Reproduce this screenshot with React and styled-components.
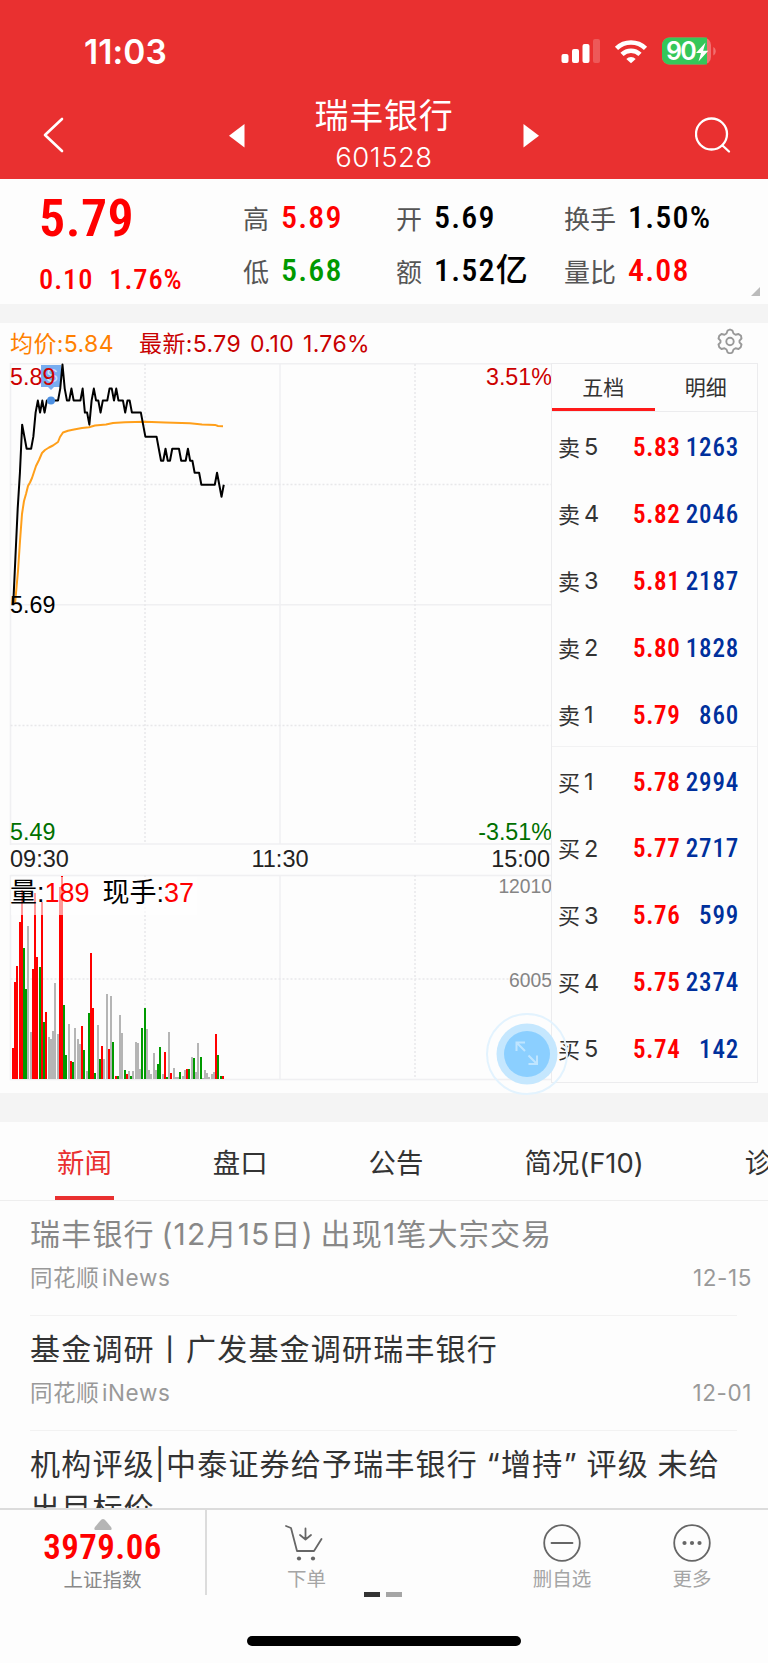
import React from "react";
import styled, { createGlobalStyle } from "styled-components";

const cjk = `"Noto Sans CJK SC", sans-serif`;

// one entry per minute since 09:30, in cents
const prices = [
  569, 573, 577, 580, 584, 583, 582, 582, 582, 583, 585, 586, 585, 586, 585,
  586, 586, 586, 586, 586, 586, 587, 589, 587, 586, 586, 587, 586, 586, 586,
  586, 587, 585, 585, 584, 586, 587, 586, 586, 585, 586, 586, 586, 587, 587,
  586, 587, 586, 586, 586, 585, 586, 586, 585, 585, 585, 585, 585, 584, 583,
  583, 583, 583, 583, 583, 582, 581, 581, 582, 581, 581, 582, 582, 582, 582,
  581, 581, 581, 582, 581, 581, 580, 580, 580, 579, 579, 579, 579, 579, 579,
  579, 580, 579, 578, 579,
];

// r = up, g = down, n = unchanged, followed by the bar height
const volumes =
  "r31 r97 r113 r157 r189 g131 g90 n153 n47 r110 r186 r122 g112 r177 g57 r67 n42 n40 n48 n96 n45 r192 r203 g74 g24 n55 r18 g17 n51 n40 n35 r53 g29 n8 g66 r126 r71 g6 n54 g20 r33 n20 n85 r30 n83 g37 r3 g3 n64 n46 g9 r5 n8 g3 n8 n37 n36 n10 g51 g71 n50 n9 n5 n26 n9 g15 g32 n5 r27 g2 n47 r6 n11 n2 n2 g7 n3 n9 r10 g10 n22 g21 n7 n36 g22 n1 n9 n6 n2 n5 n7 r45 g24 g3 r3".split(
    " "
  );

const barColors = { r: "#ff0000", g: "#009a00", n: "#b5b5b5" };

const average =
  "15,241 18,208 20,178 22,151 24,138 26,131 28,123 30,119.500 32,115 34,109 36,103 39,97 42,90 45,87 49,84.500 53,82.500 58,79 60,74 63,69.500 68,67.800 74,66.600 82,64.900 89,64.200 95,62.500 106,61.500 113,60 125,59.200 145,58.800 165,59.600 190,60.300 202,61.500 215,61.900 218,63 223,63.200";

const orders = [
  { side: "卖", level: 5, price: "5.83", volume: 1263 },
  { side: "卖", level: 4, price: "5.82", volume: 2046 },
  { side: "卖", level: 3, price: "5.81", volume: 2187 },
  { side: "卖", level: 2, price: "5.80", volume: 1828 },
  { side: "卖", level: 1, price: "5.79", volume: 860 },
  { side: "买", level: 1, price: "5.78", volume: 2994 },
  { side: "买", level: 2, price: "5.77", volume: 2717 },
  { side: "买", level: 3, price: "5.76", volume: 599 },
  { side: "买", level: 4, price: "5.75", volume: 2374 },
  { side: "买", level: 5, price: "5.74", volume: 142 },
];

const news = [
  { title: "瑞丰银行\u2009(12月15日)\u2009出现1笔大宗交易", date: "12-15", read: true },
  { title: "基金调研丨广发基金调研瑞丰银行", date: "12-01" },
  { title: "机构评级|中泰证券给予瑞丰银行 “增持” 评级 未给出目标价" },
];

function StatusBar() {
  return (
    <StatusRow>
      <Clock>11:03</Clock>
      <svg width="156" height="30" viewBox="0 0 156 30">
        <g fill="#fff">
          <rect x="1.500" y="18" width="7" height="9" rx="2" />
          <rect x="12" y="13" width="7" height="14" rx="2" />
          <rect x="22.500" y="8" width="7" height="19" rx="2" />
          <rect x="33" y="3" width="7" height="24" rx="2" opacity=".2" />
        </g>
        <g fill="none" stroke="#fff" strokeWidth="4.600">
          <path d="M56.500 12.300a21 21 0 0 1 29 0" />
          <path d="M62 18.400a13 13 0 0 1 18 0" />
        </g>
        <path d="M66.300 22.900a6.600 6.600 0 0 1 9.400 0L71 27.300z" fill="#fff" />
        <rect x="102" y="1.500" width="49" height="27" rx="7.500" fill="#f17070" />
        <path
          d="M109.500 1.500H147v27h-37.500a7.500 7.500 0 0 1-7.500-7.500v-12a7.500 7.500 0 0 1 7.500-7.500z"
          fill="#35c759"
        />
        <path d="M153.300 11c3.200 1.200 3.200 7.300 0 8.500z" fill="#f17070" />
        <text x="106" y="24" className="level">
          90
        </text>
        <path d="M145.500 6.500l-9.500 10.500h5l-2.500 8.500 9.800-10.800h-5.200z" fill="#fff" />
      </svg>
    </StatusRow>
  );
}

function Chart() {
  const points = prices
    .map((p, i) => `${13.2 + i * 2.24},${(589 - p) * 12.03 + 1.5}`)
    .join(" ");

  return (
    <ChartSvg width="552" height="720" viewBox="0 0 552 720">
      <g fill="none" stroke="#f0f0f2" strokeWidth="1.500">
        <path d="M10.500 482V.7H552M10.500 241.800H552M10.500 481H552M10.500 512.500H552M10.500 512v204.500H552M280 1v480M280 512v204" />
        <path
          d="M10.500 121.500H552M10.500 362.500H552M145 1v480M415 1v480M10.500 616H552M145 512v204M415 512v204"
          strokeDasharray="2 2"
          stroke="#e8e8ea"
        />
      </g>

      <path d="M41 2h20v22h-7l-3 3-3-3h-7z" fill="#78adf0" />
      <text x="46" y="19" fontSize="18" fill="#cbdff9">
        S
      </text>
      <polyline points={average} stroke="#ff9f1a" className="line" />
      <polyline points={points} stroke="#000" className="line" />
      <circle cx="51" cy="37.500" r="4" fill="#4d90e2" />

      <g shapeRendering="crispEdges">
        {volumes.map((v, i) => {
          const height = Number(v.slice(1));
          return (
            <rect
              key={i}
              x={Math.round(11.8 + i * 2.235)}
              y={716 - height}
              width="2"
              height={height}
              fill={barColors[v[0]]}
            />
          );
        })}
      </g>
      <rect x="11" y="514" width="186" height="38" fill="#fff" opacity=".6" />

      <g fontSize="23.300">
        <text x="10" y="22" fill="#cc0000">5.89</text>
        <text x="10" y="249.500">5.69</text>
        <text x="10" y="477" fill="#007000">5.49</text>
        <text x="552" y="22" fill="#cc0000" textAnchor="end">3.51%</text>
        <text x="552" y="477" fill="#007000" textAnchor="end">-3.51%</text>
        <g fill="#222" fontSize="23.500">
          <text x="10" y="504">09:30</text>
          <text x="280" y="504" textAnchor="middle">11:30</text>
          <text x="550" y="504" textAnchor="end">15:00</text>
        </g>
        <g fontSize="19.300" fill="#858585" textAnchor="end">
          <text x="552" y="530">12010</text>
          <text x="552" y="624">6005</text>
        </g>
      </g>
      <g fontSize="27">
        <text x="10" y="539">
          量:<tspan fill="#f00">189</tspan>
        </text>
        <text x="102.500" y="539">
          现手:<tspan fill="#f00">37</tspan>
        </text>
      </g>
    </ChartSvg>
  );
}

function OrderBook() {
  return (
    <Book>
      <BookTabs>
        <BookTab $active>五档</BookTab>
        <BookTab>明细</BookTab>
      </BookTabs>
      {orders.map((o) => (
        <OrderRow key={o.side + o.level} $split={o.side === "买" && o.level === 1}>
          <OrderLabel>
            {o.side}
            <span>{o.level}</span>
          </OrderLabel>
          <OrderPrice>{o.price}</OrderPrice>
          <OrderVolume>{o.volume}</OrderVolume>
        </OrderRow>
      ))}
    </Book>
  );
}

function BottomBar() {
  return (
    <Bottom>
      <BottomRow>
        <IndexBox>
          <svg width="18" height="11" viewBox="0 0 18 11">
            <path d="M9 0c1 0 2 .8 3 2l5 6c1 1.500 1 3-1 3H2c-2 0-2-1.500-1-3l5-6c1-1.200 2-2 3-2z" fill="#b5b5b5" />
          </svg>
          <IndexValue>3979.06</IndexValue>
          <ActionLabel $dark>上证指数</ActionLabel>
        </IndexBox>
        <Action $width={199}>
          <CartIcon viewBox="0 0 38 38">
            <path d="M1 2l5 2 6 23h17l7.500-12M20.500 4.500v11M15 11l5.500 4.500 5.500-4.500" />
            <g fill="#666" stroke="none">
              <circle cx="14" cy="34.500" r="2.100" />
              <circle cx="28" cy="34.500" r="2.100" />
            </g>
          </CartIcon>
          <ActionLabel>下单</ActionLabel>
        </Action>
        <Spacer />
        <Action $width={130}>
          <ActionIcon viewBox="0 0 38 38">
            <circle cx="19" cy="19" r="17.800" />
            <path d="M8.500 19h21" />
          </ActionIcon>
          <ActionLabel>删自选</ActionLabel>
        </Action>
        <Action $width={130}>
          <ActionIcon viewBox="0 0 38 38">
            <circle cx="19" cy="19" r="17.800" />
            <g fill="#666" stroke="none">
              <circle cx="11.500" cy="19" r="2.100" />
              <circle cx="19" cy="19" r="2.100" />
              <circle cx="26.500" cy="19" r="2.100" />
            </g>
          </ActionIcon>
          <ActionLabel>更多</ActionLabel>
        </Action>
      </BottomRow>
      <Pager>
        <PagerDot $active />
        <PagerDot />
      </Pager>
      <HomeIndicator />
    </Bottom>
  );
}

export default function App() {
  return (
    <Page>
      <GlobalStyle />
      <Header>
        <StatusBar />
        <NavBar>
          <svg width="22" height="36" viewBox="0 0 22 36">
            <path d="M20 2L3 18l17 16" fill="none" stroke="#fff" strokeWidth="2.600" strokeLinecap="round" strokeLinejoin="round" />
          </svg>
          <StockSwitch>
            <svg width="16" height="24" viewBox="0 0 16 24">
              <path d="M15.500 0v23.500L0 11.750z" fill="#fff" />
            </svg>
            <StockName>
              <h1>瑞丰银行</h1>
              <span>601528</span>
            </StockName>
            <svg width="16" height="24" viewBox="0 0 16 24">
              <path d="M.5 0v23.500L16 11.750z" fill="#fff" />
            </svg>
          </StockSwitch>
          <svg width="37" height="38" viewBox="0 0 37 38">
            <g fill="none" stroke="#fff" strokeWidth="2.300" strokeLinecap="round">
              <circle cx="16.500" cy="18" r="15.500" />
              <path d="M27.500 29.500l6.500 6" />
            </g>
          </svg>
        </NavBar>
      </Header>

      <Quote>
        <QuoteMain>
          <BigPrice>5.79</BigPrice>
          <Change>
            <span>0.10</span>
            <span>1.76%</span>
          </Change>
        </QuoteMain>
        <QuoteCell $width={153}>
          <Label>高</Label>
          <Value $color="#ff0000">5.89</Value>
          <Label>低</Label>
          <Value $color="#009900">5.68</Value>
        </QuoteCell>
        <QuoteCell $width={168}>
          <Label>开</Label>
          <Value>5.69</Value>
          <Label>额</Label>
          <Value>1.52亿</Value>
        </QuoteCell>
        <QuoteCell>
          <Label>换手</Label>
          <Value>1.50%</Value>
          <Label>量比</Label>
          <Value $color="#ff0000">4.08</Value>
        </QuoteCell>
        <Corner width="9" height="9" viewBox="0 0 9 9">
          <path d="M9 0v9H0z" fill="#bbb" />
        </Corner>
      </Quote>

      <Band $height={19} />

      <ChartInfo>
        <InfoText $color="#ff8000">均价:5.84</InfoText>
        <InfoText $color="#c80000">最新:5.79 0.10 1.76%</InfoText>
        <svg width="26" height="26" viewBox="0 0 26 26">
          <g fill="none" stroke="#999" strokeWidth="1.900" strokeLinejoin="round">
            <path d="M13 1.500l2.500 1.200 1 2.800 2 1.200 3-.7 2.500 1.800.5 2.700-2 2.200v1.600l2 2.200-.8 2.700-2.200 1.800-3-.7-2 1.200-1 2.800-2.500 1.200-2.500-1.200-1-2.800-2-1.200-3 .7L2.300 19.200l-.8-2.700 2-2.200v-1.600l-2-2.200.8-2.700 2.200-1.800 3 .7 2-1.200 1-2.800z" />
            <circle cx="13" cy="13.500" r="3.700" />
          </g>
        </svg>
      </ChartInfo>

      <Market>
        <Chart />
        <OrderBook />
        <Expand width="84" height="84" viewBox="0 0 84 84">
          <circle cx="42" cy="42" r="40" fill="none" stroke="#e3f3fe" strokeWidth="2" />
          <circle cx="42" cy="42" r="30.500" fill="#c5e7fe" />
          <circle cx="42" cy="42" r="23" fill="#8bcfff" />
          <path
            d="M40 39l-8.500-8.500M31.500 39v-8.500H40M43.500 43.500l8.500 8.500M52 43.500V52h-8.500"
            fill="none"
            stroke="#bfe5ff"
            strokeWidth="2"
          />
        </Expand>
      </Market>

      <Band $height={29} />

      <Tabs>
        <Tab $active>新闻</Tab>
        <Tab>盘口</Tab>
        <Tab>公告</Tab>
        <Tab>简况(F10)</Tab>
        <Tab>诊股</Tab>
      </Tabs>

      <NewsList>
        {news.map((n) => (
          <NewsItem key={n.title}>
            <NewsTitle $read={n.read}>{n.title}</NewsTitle>
            {n.date && (
              <NewsMeta>
                <span>同花顺{"\u200a"}iNews</span>
                <span>{n.date}</span>
              </NewsMeta>
            )}
          </NewsItem>
        ))}
      </NewsList>

      <BottomBar />
    </Page>
  );
}

const GlobalStyle = createGlobalStyle`
  * {
    box-sizing: border-box;
  }
  body {
    margin: 0;
    background: #fdfdfd;
  }
  svg {
    display: block;
    flex-shrink: 0;
  }
`;

const Page = styled.div`
  width: 768px;
  height: 1663px;
  overflow: hidden;
  display: flex;
  flex-direction: column;
  background: #fdfdfd;
  font-family: Inter, ${cjk};
  white-space: nowrap;
`;

const Header = styled.header`
  height: 179px;
  flex-shrink: 0;
  background: #e93030;
  color: #fff;
`;

const StatusRow = styled.div`
  height: 94px;
  padding: 36px 52px 0 84px;
  display: flex;
  justify-content: space-between;
  .level {
    font: 600 25px Inter, sans-serif;
    letter-spacing: -1.7px;
    fill: #fff;
  }
`;

const Clock = styled.div`
  font-size: 33.5px;
  font-weight: 600;
  line-height: 32px;
  letter-spacing: 0.1px;
`;

const NavBar = styled.div`
  height: 85px;
  padding: 0 36px 0 42px;
  display: flex;
  align-items: center;
  justify-content: space-between;
  > svg {
    margin-top: -3px;
  }
`;

const StockSwitch = styled.div`
  width: 310px;
  margin-left: 9px;
  display: flex;
  align-items: center;
  justify-content: space-between;
  svg {
    margin-top: -2px;
  }
`;

const StockName = styled.div`
  display: flex;
  flex-direction: column;
  align-items: center;
  h1 {
    margin: 0;
    font: 400 34px/40px ${cjk};
    letter-spacing: 0.8px;
  }
  span {
    font-size: 27.5px;
    font-weight: 300;
    line-height: 46px;
    letter-spacing: 0.5px;
  }
`;

const Quote = styled.section`
  position: relative;
  height: 125px;
  flex-shrink: 0;
  display: flex;
`;

const numeric = `Roboto, ${cjk}`;

const QuoteMain = styled.div`
  width: 243px;
  padding: 13px 0 0 39px;
  color: #ff0000;
  font-family: ${numeric};
  font-stretch: 87%;
`;

const BigPrice = styled.div`
  font-size: 52px;
  font-weight: 600;
  letter-spacing: 0.5px;
  line-height: 54px;
`;

const Change = styled.div`
  margin-top: 18px;
  display: flex;
  gap: 16px;
  font-size: 28.5px;
  font-weight: 500;
  letter-spacing: 0.9px;
  line-height: 32px;
`;

const QuoteCell = styled.div`
  width: ${(p) => (p.$width ? `${p.$width}px` : "auto")};
  padding-top: 11px;
  display: grid;
  grid-template-columns: auto 1fr;
  grid-auto-rows: 53px;
  column-gap: 12px;
  align-items: center;
`;

const Label = styled.span`
  padding-top: 3px;
  font: 400 26px/36px ${cjk};
  color: #555;
`;

const Value = styled.span`
  font-family: ${numeric};
  font-size: 32px;
  font-weight: 500;
  font-stretch: 87%;
  letter-spacing: 1.2px;
  line-height: 36px;
  color: ${(p) => p.$color || "#000"};
`;

const Corner = styled.svg`
  position: absolute;
  right: 8px;
  bottom: 8px;
`;

const Band = styled.div`
  height: ${(p) => p.$height}px;
  flex-shrink: 0;
  background: #f4f4f4;
`;

const ChartInfo = styled.div`
  height: 40px;
  flex-shrink: 0;
  padding: 0 25px 0 10px;
  display: flex;
  align-items: center;
  gap: 25px;
  svg {
    margin-left: auto;
    margin-top: -5px;
  }
`;

const InfoText = styled.span`
  font-size: 23px;
  line-height: 32px;
  margin-top: 1px;
  letter-spacing: 0.4px;
  word-spacing: 2px;
  color: ${(p) => p.$color};
`;

const Market = styled.section`
  position: relative;
  height: 730px;
  flex-shrink: 0;
  display: flex;
`;

const ChartSvg = styled.svg`
  font-family: "Liberation Sans", ${cjk};
  .line {
    fill: none;
    stroke-width: 2;
    stroke-linejoin: round;
  }
`;

const Book = styled.div`
  width: 207px;
  height: 720px;
  border: 1px solid #ececee;
  margin-left: -1px;
`;

const BookTabs = styled.div`
  height: 48px;
  display: flex;
  border-bottom: 1px solid #ececee;
`;

const BookTab = styled.div`
  flex: 1;
  text-align: center;
  font: 400 21px/45px ${cjk};
  color: #333;
  border-bottom: ${(p) => (p.$active ? "3px solid #ff1a1a" : "none")};
`;

const OrderRow = styled.div`
  height: 66.9px;
  padding: 4px 18px 0 6px;
  display: flex;
  align-items: center;
  border-top: ${(p) => (p.$split ? "1px solid #f2f2f3" : "none")};
`;

const OrderLabel = styled.div`
  width: 75px;
  display: flex;
  align-items: center;
  gap: 4px;
  font: 400 22px/28px ${cjk};
  color: #333;
  margin-top: -3px;
  span {
    padding-top: 3px;
    font: 400 23.5px/28px Inter, sans-serif;
  }
`;

const OrderPrice = styled.div`
  font: 600 25px ${numeric};
  font-stretch: 87%;
  letter-spacing: 0.7px;
  color: #ff0000;
`;

const OrderVolume = styled.div`
  margin-left: auto;
  font: 500 25px ${numeric};
  font-stretch: 87%;
  letter-spacing: 0.8px;
  color: #00309c;
`;

const Expand = styled.svg`
  position: absolute;
  left: 485px;
  top: 649px;
`;

const Tabs = styled.nav`
  height: 79px;
  flex-shrink: 0;
  padding-left: 55px;
  display: flex;
  gap: 97px;
  border-bottom: 1px solid #eee;
`;

const Tab = styled.div`
  padding: 0 2px;
  font: 400 27.4px/83px Inter, ${cjk};
  color: ${(p) => (p.$active ? "#e93030" : "#333")};
  box-shadow: ${(p) => (p.$active ? "inset 0 -4px #e93030" : "none")};
`;

const NewsList = styled.div`
  height: 307px;
  flex-shrink: 0;
  overflow: hidden;
  padding: 0 31px 0 30px;
`;

const NewsItem = styled.article`
  height: 115px;
  padding-top: 11px;
  border-bottom: 1px solid #f2f2f2;
`;

const NewsTitle = styled.div`
  font: 400 30px/44px Inter, ${cjk};
  letter-spacing: 1.2px;
  word-spacing: -1px;
  white-space: normal;
  color: ${(p) => (p.$read ? "#888" : "#333")};
`;

const NewsMeta = styled.div`
  margin: 4px -15px 0 0;
  display: flex;
  justify-content: space-between;
  font: 400 22.5px/36px Inter, ${cjk};
  letter-spacing: 0.6px;
  color: #999;
`;

const Bottom = styled.footer`
  flex: 1;
  display: flex;
  flex-direction: column;
  align-items: center;
  border-top: 2px solid #dcdcdc;
`;

const BottomRow = styled.div`
  width: 100%;
  height: 85px;
  padding-right: 11px;
  display: flex;
`;

const IndexBox = styled.div`
  width: 207px;
  padding-top: 9px;
  display: flex;
  flex-direction: column;
  align-items: center;
  border-right: 2px solid #dcdcdc;
`;

const IndexValue = styled.div`
  margin-bottom: 1px;
  font: 600 35px/35px ${numeric};
  font-stretch: 87%;
  letter-spacing: 0.4px;
  color: #ff0000;
`;

const Action = styled.div`
  width: ${(p) => p.$width}px;
  padding-top: 14px;
  display: flex;
  flex-direction: column;
  align-items: center;
  gap: 3px;
`;

const ActionIcon = styled.svg`
  width: 38px;
  height: 38px;
  fill: none;
  stroke: #666;
  stroke-width: 1.8;
  stroke-linecap: round;
  stroke-linejoin: round;
`;

const CartIcon = styled(ActionIcon)`
  margin-left: -6px;
`;

const ActionLabel = styled.div`
  font: 400 19.5px/26px ${cjk};
  color: ${(p) => (p.$dark ? "#888" : "#a5a5a5")};
`;

const Spacer = styled.div`
  flex: 1;
`;

const Pager = styled.div`
  height: 5px;
  margin: -3px 2px 0 0;
  display: flex;
  gap: 6px;
`;

const PagerDot = styled.div`
  width: 16px;
  height: 5px;
  background: ${(p) => (p.$active ? "#333" : "#a5a5a5")};
`;

const HomeIndicator = styled.div`
  width: 274px;
  height: 10px;
  margin-top: 39px;
  border-radius: 5px;
  background: #000;
`;
